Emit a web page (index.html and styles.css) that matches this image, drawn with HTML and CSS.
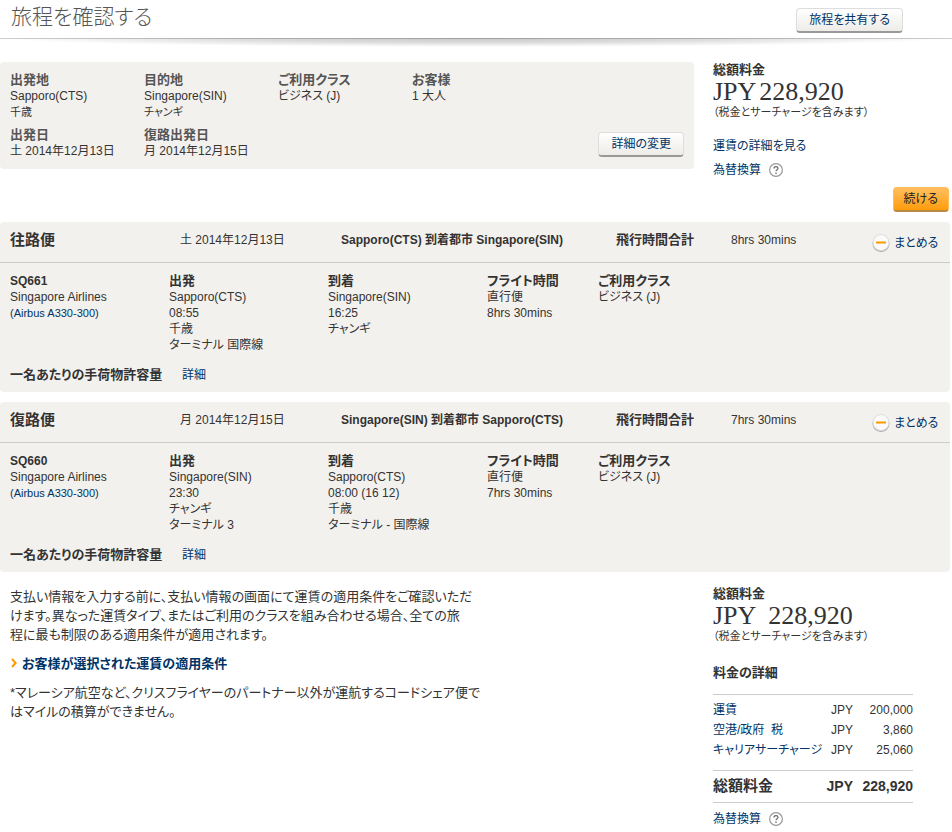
FILE: index.html
```html
<!DOCTYPE html>
<html lang="ja">
<head>
  <meta charset="UTF-8" />
  <meta name="viewport" content="width=device-width, initial-scale=1" />
  <title>旅程を確認する</title>
  <link rel="stylesheet" href="styles.css">
</head>
<body>
  <header class="page-header">
    <h1>旅程を確認する</h1>
    <button type="button" class="btn">旅程を共有する</button>
  </header>

  <main>
    <section class="columns top">
      <div class="summary">
        <dl class="summary-list">
          <div>
            <dt>出発地</dt>
            <dd>Sapporo(CTS)</dd>
            <dd class="small">千歳</dd>
          </div>
          <div>
            <dt>目的地</dt>
            <dd>Singapore(SIN)</dd>
            <dd class="small">チャンギ</dd>
          </div>
          <div>
            <dt>ご利用クラス</dt>
            <dd>ビジネス (J)</dd>
          </div>
          <div>
            <dt>お客様</dt>
            <dd>1 大人</dd>
          </div>
          <div>
            <dt>出発日</dt>
            <dd>土 2014年12月13日</dd>
          </div>
          <div>
            <dt>復路出発日</dt>
            <dd>月 2014年12月15日</dd>
          </div>
        </dl>
        <button type="button" class="btn">詳細の変更</button>
      </div>

      <div class="price">
        <h2>総額料金</h2>
        <p class="amount"><span>JPY</span><span>228,920</span></p>
        <p class="note">（税金とサーチャージを含みます）</p>
        <p class="fare-link"><a href="#fare">運賃の詳細を見る</a></p>
        <p class="currency">
          <a href="#currency">為替換算</a>
          <svg class="help" viewBox="0 0 14 14"><circle cx="7" cy="7" r="6.4" /><path d="M5 5.4C5 4.2 5.9 3.6 7 3.6s2 .7 2 1.7c0 1.5-2 1.4-2 3M7 9.6v1.4" /></svg>
        </p>
      </div>
    </section>

    <div class="continue">
      <button type="button" class="btn btn-primary">続ける</button>
    </div>

    <section class="leg">
      <div class="leg-header">
        <h2>往路便</h2>
        <span>土 2014年12月13日</span>
        <strong>Sapporo(CTS) 到着都市 Singapore(SIN)</strong>
        <strong class="total-time">飛行時間合計</strong>
        <span>8hrs 30mins</span>
        <a class="toggle" href="#outbound">
          <svg viewBox="0 0 18 18"><circle class="shade" cx="9" cy="9.5" r="8.5" /><circle class="face" cx="9" cy="8.5" r="8" /><path d="M4 8.5h10" /></svg>まとめる</a>
      </div>
      <div class="leg-body" id="outbound">
        <div>
          <h3 class="flight-no">SQ661</h3>
          <p>Singapore Airlines</p>
          <p><a class="plane" href="#a330">(Airbus A330-300)</a></p>
        </div>
        <div>
          <h3>出発</h3>
          <p>Sapporo(CTS)</p>
          <p>08:55</p>
          <p>千歳</p>
          <p>ターミナル 国際線</p>
        </div>
        <div>
          <h3>到着</h3>
          <p>Singapore(SIN)</p>
          <p>16:25</p>
          <p>チャンギ</p>
        </div>
        <div>
          <h3>フライト時間</h3>
          <p>直行便</p>
          <p>8hrs 30mins</p>
        </div>
        <div>
          <h3>ご利用クラス</h3>
          <p>ビジネス (J)</p>
        </div>
      </div>
      <p class="baggage"><strong>一名あたりの手荷物許容量</strong><a href="#baggage">詳細</a></p>
    </section>

    <section class="leg">
      <div class="leg-header">
        <h2>復路便</h2>
        <span>月 2014年12月15日</span>
        <strong>Singapore(SIN) 到着都市 Sapporo(CTS)</strong>
        <strong class="total-time">飛行時間合計</strong>
        <span>7hrs 30mins</span>
        <a class="toggle" href="#return">
          <svg viewBox="0 0 18 18"><circle class="shade" cx="9" cy="9.5" r="8.5" /><circle class="face" cx="9" cy="8.5" r="8" /><path d="M4 8.5h10" /></svg>まとめる</a>
      </div>
      <div class="leg-body" id="return">
        <div>
          <h3 class="flight-no">SQ660</h3>
          <p>Singapore Airlines</p>
          <p><a class="plane" href="#a330">(Airbus A330-300)</a></p>
        </div>
        <div>
          <h3>出発</h3>
          <p>Singapore(SIN)</p>
          <p>23:30</p>
          <p>チャンギ</p>
          <p>ターミナル 3</p>
        </div>
        <div>
          <h3>到着</h3>
          <p>Sapporo(CTS)</p>
          <p>08:00 (16 12)</p>
          <p>千歳</p>
          <p>ターミナル - 国際線</p>
        </div>
        <div>
          <h3>フライト時間</h3>
          <p>直行便</p>
          <p>7hrs 30mins</p>
        </div>
        <div>
          <h3>ご利用クラス</h3>
          <p>ビジネス (J)</p>
        </div>
      </div>
      <p class="baggage"><strong>一名あたりの手荷物許容量</strong><a href="#baggage">詳細</a></p>
    </section>

    <section class="columns bottom">
      <div class="conditions">
        <p>支払い情報を入力する前に、支払い情報の画面にて運賃の適用条件をご確認いただ<br>けます。異なった運賃タイプ、またはご利用のクラスを組み合わせる場合、全ての旅<br>程に最も制限のある適用条件が適用されます。</p>
        <p class="rules">
          <a href="#rules"><svg viewBox="0 0 6 10"><path d="M1 1l3.6 4L1 9" /></svg>お客様が選択された運賃の適用条件</a>
        </p>
        <p>*マレーシア航空など、クリスフライヤーのパートナー以外が運航するコードシェア便で<br>はマイルの積算ができません。</p>
      </div>

      <div class="price" id="fare">
        <h2>総額料金</h2>
        <p class="amount wide"><span>JPY</span><span>228,920</span></p>
        <p class="note">（税金とサーチャージを含みます）</p>
        <h2 class="fare-title">料金の詳細</h2>
        <table class="fare">
          <tbody>
            <tr><th scope="row"><a href="#base">運賃</a></th><td>JPY</td><td>200,000</td></tr>
            <tr><th scope="row"><a href="#tax">空港/政府&nbsp; 税</a></th><td>JPY</td><td>3,860</td></tr>
            <tr><th scope="row"><a href="#surcharge">キャリアサーチャージ</a></th><td>JPY</td><td>25,060</td></tr>
          </tbody>
          <tfoot>
            <tr><th scope="row">総額料金</th><td>JPY</td><td>228,920</td></tr>
          </tfoot>
        </table>
        <p class="currency">
          <a href="#currency">為替換算</a>
          <svg class="help" viewBox="0 0 14 14"><circle cx="7" cy="7" r="6.4" /><path d="M5 5.4C5 4.2 5.9 3.6 7 3.6s2 .7 2 1.7c0 1.5-2 1.4-2 3M7 9.6v1.4" /></svg>
        </p>
      </div>
    </section>
  </main>
</body>
</html>
```
FILE: styles.css
```css
* {
  box-sizing: border-box;
}
body {
  margin: 0;
  background: #fff;
  color: #333;
  font-family: Arial, "Liberation Sans", "Noto Sans CJK JP", sans-serif;
  font-size: 12px;
  line-height: 16px;
  font-feature-settings: "palt";
}
h1, h2, h3, p, dl, dt, dd {
  margin: 0;
}
h2, h3, dt {
  font-size: 13px;
  font-weight: bold;
}
a {
  color: #036;
  text-decoration: none;
}
a:hover {
  text-decoration: underline;
}

/* header */
.page-header {
  position: relative;
  display: flex;
  justify-content: space-between;
  align-items: flex-start;
  height: 39px;
  padding: 8px 49px 0 11px;
  border-bottom: 1px solid #ccc;
}
.page-header::after {
  content: "";
  position: absolute;
  left: 0;
  right: 0;
  top: 38px;
  height: 9px;
  background: radial-gradient(ellipse 50% 100% at 50% 0, rgba(0, 0, 0, 0.22), rgba(0, 0, 0, 0.14) 50%, transparent);
}
h1 {
  color: #555;
  font-size: 21px;
  line-height: 18px;
  font-weight: 300;
}

/* buttons */
.btn {
  height: 25px;
  padding: 0 12px;
  border: 1px solid #ddd;
  border-bottom: 2px solid #999;
  border-radius: 4px;
  background: linear-gradient(#fff, #eeece8);
  color: #036;
  font: inherit;
  font-feature-settings: inherit;
  cursor: pointer;
}
.btn-primary {
  padding: 0 10px;
  border-color: #fb5;
  border-bottom-color: #b98a45;
  background: linear-gradient(#ffbf60, #ff9c0c);
  color: #222;
}

/* two columns: content and price */
.columns {
  display: grid;
  grid-template-columns: 1fr 239px;
}
.top {
  padding-top: 23px;
}
.summary {
  display: flex;
  align-items: flex-end;
  justify-content: space-between;
  align-self: start;
  margin-right: 19px;
  padding: 9px 10px;
  border-radius: 4px;
  background: #f3f1ed;
}
.summary-list {
  display: grid;
  grid-template-columns: repeat(4, minmax(0, 134px));
  flex: 1;
  row-gap: 7px;
  line-height: 17px;
}
.summary-list dt {
  color: #555;
}
.summary-list .small {
  font-size: 11px;
  line-height: 14px;
}
.summary .btn {
  margin-bottom: 3px;
}

.amount {
  display: flex;
  gap: 3px;
  font-family: Georgia, "Liberation Serif", serif;
  font-size: 26px;
  line-height: 28px;
}
.wide {
  gap: 12px;
}
.note {
  font-size: 11px;
  line-height: 12px;
}
.fare-link {
  margin-top: 20px;
}
.currency {
  display: flex;
  align-items: center;
  gap: 8px;
  margin-top: 8px;
}
.help {
  width: 14px;
  height: 14px;
  fill: none;
  stroke: #666;
  stroke-width: 1.2;
}
.help circle {
  stroke: #999;
}

.continue {
  display: flex;
  justify-content: flex-end;
  margin: 9px 3px 10px 0;
}

/* flights */
.leg {
  margin: 0 2px 10px 0;
  border-radius: 4px;
  background: #f3f1ed;
}
.leg-header {
  display: grid;
  grid-template-columns: 170fr 161fr 275fr 115fr 141fr 68px;
  align-items: center;
  height: 41px;
  padding: 0 10px 4px;
  border-bottom: 1px solid #ccc;
}
.leg-header h2 {
  font-size: 15px;
}
.total-time {
  font-size: 13px;
}
.toggle {
  display: flex;
  align-items: center;
  gap: 4px;
  margin-top: 5px;
  font-size: 12px;
  white-space: nowrap;
}
.toggle svg {
  width: 18px;
  height: 18px;
  fill: none;
}
.toggle .shade {
  fill: #aaa;
}
.toggle .face {
  fill: #fafafa;
  stroke: #ddd;
}
.toggle path {
  stroke: #f90;
  stroke-width: 2;
}
.leg-body {
  display: grid;
  grid-template-columns: 159fr 159fr 159fr 111fr 342fr;
  padding: 10px 10px 0;
}
.flight-no {
  font-size: 12px;
}
.plane {
  font-size: 11px;
}
.baggage {
  display: flex;
  gap: 10px;
  padding: 14px 10px 9px;
}
.baggage strong {
  min-width: 162px;
  font-size: 13px;
}

/* fare conditions and breakdown */
.bottom {
  padding-top: 4px;
}
.conditions {
  padding: 1px 0 0 10px;
  font-size: 13px;
  line-height: 19px;
  white-space: nowrap;
}
.rules {
  margin: 10px 0;
  font-weight: bold;
}
.rules svg {
  width: 6px;
  height: 10px;
  margin: 0 5px 0 1px;
  fill: none;
  stroke: #f90;
  stroke-width: 2;
}
.fare-title {
  margin: 23px 0 13px;
}
.fare {
  width: 200px;
  border-collapse: collapse;
  border-top: 1px solid #ccc;
  border-bottom: 1px solid #ccc;
  line-height: 20px;
}
.fare th {
  padding: 0;
  font-weight: normal;
  text-align: left;
  white-space: nowrap;
}
.fare td {
  padding: 0;
  text-align: right;
}
.fare td:last-child {
  width: 60px;
}
.fare tbody tr:first-child > * {
  padding-top: 5px;
}
.fare tbody tr:last-child > * {
  padding-bottom: 10px;
}
.fare tfoot {
  border-top: 1px solid #ccc;
}
.fare tfoot td, .fare tfoot th {
  padding: 5px 0 6px;
  font-size: 14px;
  font-weight: bold;
}
.fare tfoot th {
  font-size: 15px;
}
```
